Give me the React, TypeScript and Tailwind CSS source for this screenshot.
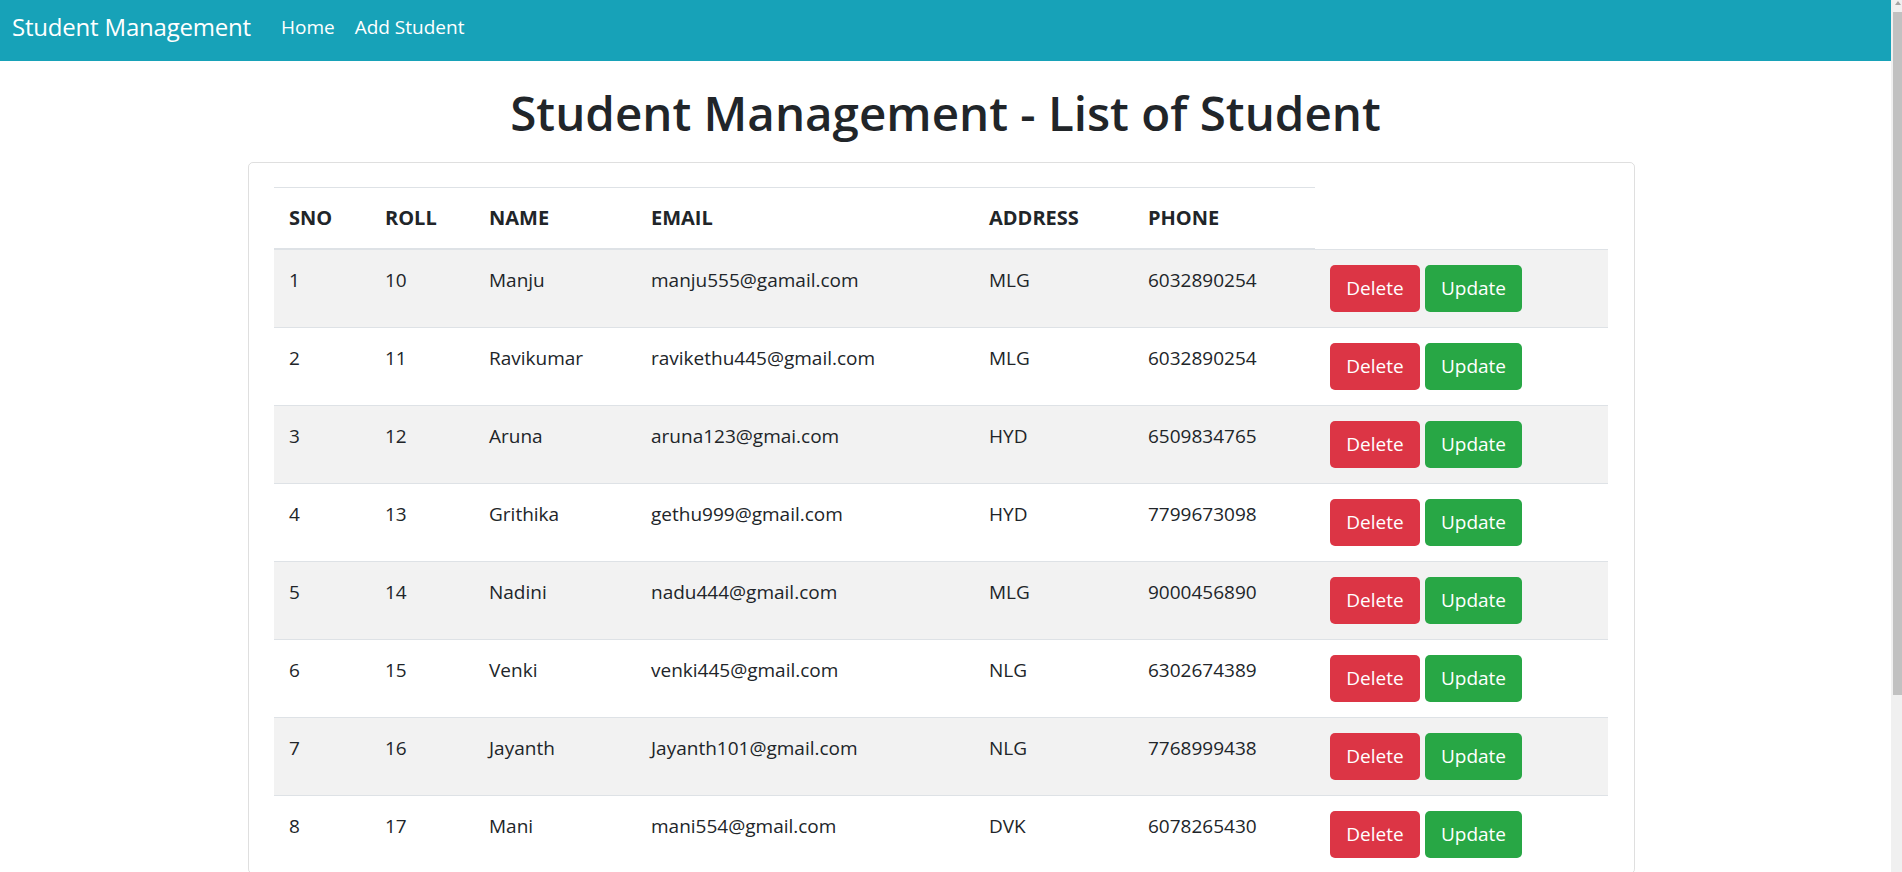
import React from "react";

const students = [
  { sno: 1, roll: 10, name: "Manju", email: "manju555@gamail.com", address: "MLG", phone: "6032890254" },
  { sno: 2, roll: 11, name: "Ravikumar", email: "ravikethu445@gmail.com", address: "MLG", phone: "6032890254" },
  { sno: 3, roll: 12, name: "Aruna", email: "aruna123@gmai.com", address: "HYD", phone: "6509834765" },
  { sno: 4, roll: 13, name: "Grithika", email: "gethu999@gmail.com", address: "HYD", phone: "7799673098" },
  { sno: 5, roll: 14, name: "Nadini", email: "nadu444@gmail.com", address: "MLG", phone: "9000456890" },
  { sno: 6, roll: 15, name: "Venki", email: "venki445@gmail.com", address: "NLG", phone: "6302674389" },
  { sno: 7, roll: 16, name: "Jayanth", email: "Jayanth101@gmail.com", address: "NLG", phone: "7768999438" },
  { sno: 8, roll: 17, name: "Mani", email: "mani554@gmail.com", address: "DVK", phone: "6078265430" },
];

const headers = ["SNO", "ROLL", "NAME", "EMAIL", "ADDRESS", "PHONE"];

export default function App() {
  return (
    <div className="flex h-[872px] w-[1902px] overflow-hidden bg-white font-['Open_Sans',sans-serif] text-[#212529]">
      <div className="flex min-w-0 flex-1 flex-col">
        <nav className="flex h-[61px] shrink-0 items-center bg-[#17a2b8] pb-[7px] pl-[12px]">
          <span className="text-[24px] leading-[30px] tracking-[-0.2px] text-white">Student Management</span>
          <a className="ml-[30px] text-[19px] leading-[30px] text-white">Home</a>
          <a className="ml-[20px] text-[19px] leading-[30px] text-white">Add Student</a>
        </nav>
        <h1 className="mt-[22px] h-[60px] text-center text-[47.5px] font-semibold leading-[60px]">
          Student Management - List of Student
        </h1>
        <div className="ml-[248px] mt-[19px] w-[1387px] shrink-0 rounded-[5px] border border-[rgba(0,0,0,0.125)] px-[25px] pt-[24px]">
          <table className="w-[1334px] table-fixed border-collapse text-[19px] leading-[30px]">
            <colgroup>
              <col className="w-[96px]" />
              <col className="w-[104px]" />
              <col className="w-[162px]" />
              <col className="w-[338px]" />
              <col className="w-[159px]" />
              <col className="w-[182px]" />
              <col />
            </colgroup>
            <thead>
              <tr>
                {headers.map((h) => (
                  <th
                    key={h}
                    className="border-t border-b-2 border-[#dee2e6] p-[15px] text-left align-bottom text-[20px] font-bold"
                  >
                    {h}
                  </th>
                ))}
              </tr>
            </thead>
            <tbody>
              {students.map((s, i) => (
                <tr key={s.sno} className={i % 2 === 0 ? "bg-[#f2f2f2]" : "bg-white"}>
                  <td className="border-t border-[#dee2e6] p-[15px] align-top">{s.sno}</td>
                  <td className="border-t border-[#dee2e6] p-[15px] align-top">{s.roll}</td>
                  <td className="border-t border-[#dee2e6] p-[15px] align-top">{s.name}</td>
                  <td className="border-t border-[#dee2e6] p-[15px] align-top">{s.email}</td>
                  <td className="border-t border-[#dee2e6] p-[15px] align-top">{s.address}</td>
                  <td className="border-t border-[#dee2e6] p-[15px] align-top">{s.phone}</td>
                  <td className="border-t border-[#dee2e6] p-[15px] align-top">
                    <div className="flex gap-[5px]">
                      <button className="h-[47px] w-[90px] rounded-[5px] bg-[#dc3545] text-[19px] leading-[30px] text-white">
                        Delete
                      </button>
                      <button className="h-[47px] w-[97px] rounded-[5px] bg-[#28a745] text-[19px] leading-[30px] text-white">
                        Update
                      </button>
                    </div>
                  </td>
                </tr>
              ))}
            </tbody>
          </table>
        </div>
      </div>
      <div className="flex w-[11px] shrink-0 flex-col bg-[#f0f0f0]">
        <div className="flex h-[12px] justify-end pr-[1px] pt-[1px]">
          <svg width="6" height="4" viewBox="0 0 6 4">
            <path d="M3 0 L6 4 L0 4 Z" fill="#a3a3a3" />
          </svg>
        </div>
        <div className="ml-[2px] h-[683px] bg-[#c1c1c1]" />
      </div>
    </div>
  );
}
